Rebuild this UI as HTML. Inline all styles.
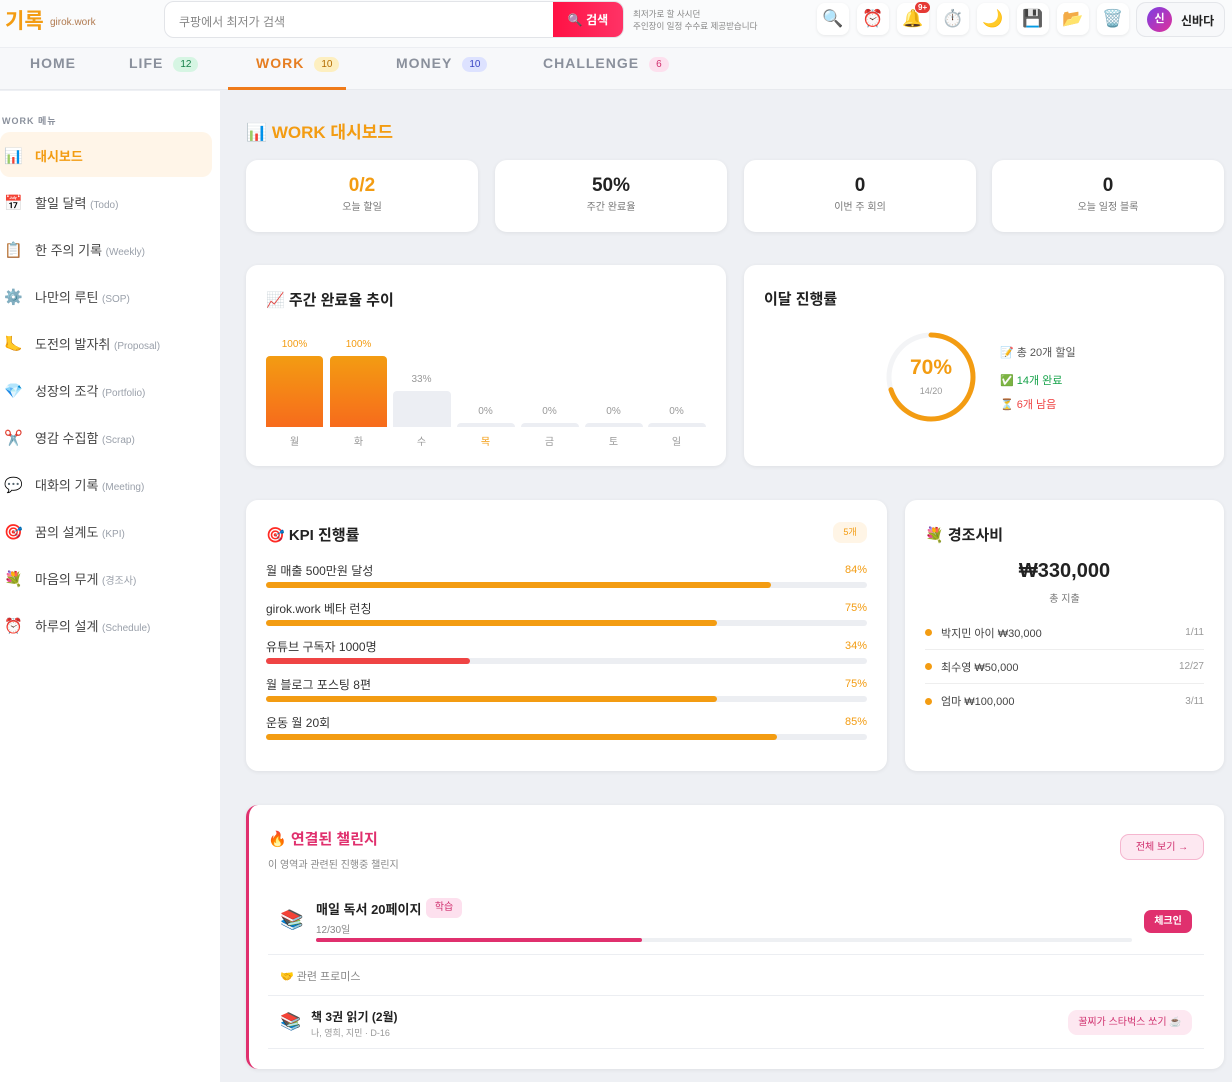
<!DOCTYPE html>
<html><head><meta charset="utf-8"><style>
*{box-sizing:border-box;margin:0;padding:0}
body{width:1232px;height:1082px;overflow:hidden;font-family:"Liberation Sans","Noto Sans CJK KR",sans-serif;background:#eef0f4;position:relative;color:#222}
.a{position:absolute}
.hdr{left:0;top:0;width:1232px;height:48px;background:#fafbfc;border-bottom:1px solid #eceef2}
.nav{left:0;top:48px;width:1232px;height:42px;background:#f7f8fa;border-bottom:1px solid #e8eaee}
.nv{position:absolute;top:55px;font-size:14px;font-weight:bold;letter-spacing:1px;color:#8a909c}
.bd{display:inline-block;font-size:10px;font-weight:normal;letter-spacing:0;padding:2px 7px;border-radius:9px;margin-left:10px;vertical-align:1px}
.side{left:0;top:91px;width:220px;height:991px;background:#fff}
.mi{position:absolute;left:4px;font-size:13px;color:#444;white-space:nowrap}
.mi .ic{display:inline-block;width:22px;font-size:15px;margin-right:9px}
.mi small{font-size:10px;color:#9aa0aa}
.card{position:absolute;background:#fff;border-radius:12px;box-shadow:0 1px 4px rgba(0,0,0,.07)}
.stat{top:160px;width:232px;height:72px;text-align:center}
.stat b{display:block;font-size:19px;margin-top:15px;color:#222}
.stat span{font-size:10px;color:#777}
.icb{position:absolute;top:3px;width:32px;height:32px;background:#fff;border-radius:8px;box-shadow:0 1px 3px rgba(0,0,0,.08);text-align:center;line-height:32px;font-size:17px}
.h3{font-size:15px;font-weight:bold;color:#222}
.bar{position:absolute;border-radius:4px 4px 0 0}
.pl{position:absolute;font-size:10px;color:#999;text-align:center;width:57px}
.kl{position:absolute;left:20px;right:20px;font-size:12px;color:#333;display:flex;justify-content:space-between;align-items:center;height:16px}
.kl i{font-style:normal;color:#f39c12;font-size:11px}
.kt{position:absolute;left:20px;right:20px;height:6px;border-radius:3px;background:#eceef2}
.kt div{height:6px;border-radius:3px;background:#f39c12}
.ev{position:absolute;left:20px;right:20px;font-size:11px;color:#444;height:34px;border-bottom:1px solid #eee;display:flex;align-items:center}
.ev:before{content:"";display:inline-block;width:7px;height:7px;border-radius:50%;background:#f39c12;margin-right:9px}
.ev i{margin-left:auto;font-style:normal;font-size:10px;color:#999}
</style></head><body>
<div class="a hdr"></div>
<div class="a" style="left:5px;top:5px;font-size:21px;font-weight:bold;color:#f39c12">기록</div>
<div class="a" style="left:50px;top:17px;font-size:10px;color:#b07a50">girok.work</div>
<div class="a" style="left:164px;top:1px;width:460px;height:37px;border:1px solid #e2e4e8;border-radius:10px;background:#fff;overflow:hidden">
<span class="a" style="left:14px;top:11px;font-size:12px;color:#888">쿠팡에서 최저가 검색</span>
<div class="a" style="right:0;top:0;width:70px;height:37px;background:linear-gradient(90deg,#ff1144,#ff3366);color:#fff;font-size:12px;font-weight:bold;line-height:37px;text-align:center">🔍 검색</div></div>
<div class="a" style="left:633px;top:8px;font-size:8.5px;color:#888;line-height:12px">최저가로 할 사시던<br>주인장이 일정 수수료 제공받습니다</div>
<div class="icb" style="left:817px">🔍</div><div class="icb" style="left:857px">⏰</div><div class="icb" style="left:897px">🔔</div>
<div class="a" style="left:915px;top:2px;background:#e53935;color:#fff;font-size:8px;border-radius:8px;padding:1px 3px;font-weight:bold">9+</div>
<div class="icb" style="left:937px">⏱️</div><div class="icb" style="left:977px">🌙</div><div class="icb" style="left:1017px">💾</div><div class="icb" style="left:1057px">📂</div><div class="icb" style="left:1097px">🗑️</div>
<div class="a" style="left:1136px;top:2px;width:89px;height:35px;border:1px solid #e4e6ea;border-radius:10px;background:#f7f8fa"></div>
<div class="a" style="left:1147px;top:7px;width:25px;height:25px;border-radius:50%;background:linear-gradient(135deg,#7b3fe4,#e0309a);color:#fff;font-size:11px;font-weight:bold;text-align:center;line-height:25px">신</div>
<div class="a" style="left:1181px;top:12px;font-size:12px;font-weight:bold;color:#222">신바다</div>

<div class="a nav"></div>
<div class="nv" style="left:30px">HOME</div>
<div class="nv" style="left:129px">LIFE<span class="bd" style="background:#d6f5e3;color:#16804a">12</span></div>
<div class="nv" style="left:256px;color:#e67e22">WORK<span class="bd" style="background:#fdefc0;color:#b36b00">10</span></div>
<div class="a" style="left:228px;top:87px;width:118px;height:3px;background:#ef7b1a"></div>
<div class="nv" style="left:396px">MONEY<span class="bd" style="background:#dde2ff;color:#3b46c4">10</span></div>
<div class="nv" style="left:543px">CHALLENGE<span class="bd" style="background:#fde0ee;color:#d0306e">6</span></div>

<div class="a side"></div>
<div class="a" style="left:2px;top:114px;font-size:9px;font-weight:bold;color:#8a909c;letter-spacing:1px">WORK 메뉴</div>
<div class="a" style="left:0;top:132px;width:212px;height:45px;background:#fff5e8;border-radius:10px"></div>
<div class="mi" style="top:146px;color:#f39c12;font-weight:bold"><span class="ic">📊</span>대시보드</div>
<div class="mi" style="top:193px"><span class="ic">📅</span>할일 달력 <small>(Todo)</small></div>
<div class="mi" style="top:240px"><span class="ic">📋</span>한 주의 기록 <small>(Weekly)</small></div>
<div class="mi" style="top:287px"><span class="ic">⚙️</span>나만의 루틴 <small>(SOP)</small></div>
<div class="mi" style="top:334px"><span class="ic">🦶</span>도전의 발자취 <small>(Proposal)</small></div>
<div class="mi" style="top:381px"><span class="ic">💎</span>성장의 조각 <small>(Portfolio)</small></div>
<div class="mi" style="top:428px"><span class="ic">✂️</span>영감 수집함 <small>(Scrap)</small></div>
<div class="mi" style="top:475px"><span class="ic">💬</span>대화의 기록 <small>(Meeting)</small></div>
<div class="mi" style="top:522px"><span class="ic">🎯</span>꿈의 설계도 <small>(KPI)</small></div>
<div class="mi" style="top:569px"><span class="ic">💐</span>마음의 무게 <small>(경조사)</small></div>
<div class="mi" style="top:616px"><span class="ic">⏰</span>하루의 설계 <small>(Schedule)</small></div>

<div class="a" style="left:246px;top:118px;font-size:17px;font-weight:bold;color:#f39c12">📊 WORK 대시보드</div>
<div class="card stat" style="left:246px"><b style="color:#f39c12">0/2</b><span>오늘 할일</span></div>
<div class="card stat" style="left:495px"><b>50%</b><span>주간 완료율</span></div>
<div class="card stat" style="left:744px"><b>0</b><span>이번 주 회의</span></div>
<div class="card stat" style="left:992px"><b>0</b><span>오늘 일정 블록</span></div>

<div class="card" style="left:246px;top:265px;width:480px;height:201px"></div>
<div class="a h3" style="left:266px;top:289px">📈 주간 완료율 추이</div>
<div class="pl" style="left:266px;top:339px;color:#f39c12">100%</div><div class="bar" style="left:266px;top:356px;width:57px;height:71px;background:linear-gradient(#f39c12,#f76b1c)"></div>
<div class="pl" style="left:330px;top:339px;color:#f39c12">100%</div><div class="bar" style="left:330px;top:356px;width:57px;height:71px;background:linear-gradient(#f39c12,#f76b1c)"></div>
<div class="pl" style="left:393px;top:374px">33%</div><div class="bar" style="left:393px;top:391px;width:58px;height:36px;background:#eceef3"></div>
<div class="pl" style="left:457px;top:406px">0%</div><div class="bar" style="left:457px;top:423px;width:58px;height:4px;background:#eceef3"></div>
<div class="pl" style="left:521px;top:406px">0%</div><div class="bar" style="left:521px;top:423px;width:58px;height:4px;background:#eceef3"></div>
<div class="pl" style="left:585px;top:406px">0%</div><div class="bar" style="left:585px;top:423px;width:58px;height:4px;background:#eceef3"></div>
<div class="pl" style="left:648px;top:406px">0%</div><div class="bar" style="left:648px;top:423px;width:58px;height:4px;background:#eceef3"></div>
<div class="pl" style="left:266px;top:433px">월</div><div class="pl" style="left:330px;top:433px">화</div><div class="pl" style="left:393px;top:433px">수</div><div class="pl" style="left:457px;top:433px;color:#f39c12">목</div><div class="pl" style="left:521px;top:433px">금</div><div class="pl" style="left:585px;top:433px">토</div><div class="pl" style="left:648px;top:433px">일</div>

<div class="card" style="left:744px;top:265px;width:480px;height:201px"></div>
<div class="a h3" style="left:764px;top:288px">이달 진행률</div>
<svg class="a" style="left:884px;top:330px" width="94" height="94"><circle cx="47" cy="47" r="42" fill="none" stroke="#f3f4f6" stroke-width="5"/><circle cx="47" cy="47" r="42" fill="none" stroke="#f39c12" stroke-width="5" stroke-dasharray="184.7 264" transform="rotate(-90 47 47)" stroke-linecap="round"/></svg>
<div class="a" style="left:884px;top:356px;width:94px;text-align:center;font-size:21px;font-weight:bold;color:#f39c12">70%</div>
<div class="a" style="left:884px;top:386px;width:94px;text-align:center;font-size:9px;color:#999">14/20</div>
<div class="a" style="left:1000px;top:344px;font-size:11px;color:#555">📝 총 20개 할일</div>
<div class="a" style="left:1000px;top:372px;font-size:11px;color:#16a34a">✅ 14개 완료</div>
<div class="a" style="left:1000px;top:396px;font-size:11px;color:#ef4444">⏳ 6개 남음</div>

<div class="card" style="left:246px;top:500px;width:641px;height:271px"></div>
<div class="a h3" style="left:266px;top:524px">🎯 KPI 진행률</div>
<div class="a" style="left:833px;top:522px;width:34px;height:21px;background:#fff5e6;border-radius:8px;font-size:9px;color:#f39c12;text-align:center;line-height:21px">5개</div>
<div style="position:absolute;left:246px;top:500px;width:641px">
<div class="kl" style="top:62px">월 매출 500만원 달성<i>84%</i></div><div class="kt" style="top:82px"><div style="width:84%"></div></div>
<div class="kl" style="top:100px">girok.work 베타 런칭<i>75%</i></div><div class="kt" style="top:120px"><div style="width:75%"></div></div>
<div class="kl" style="top:138px">유튜브 구독자 1000명<i>34%</i></div><div class="kt" style="top:158px"><div style="width:34%;background:#ef4444"></div></div>
<div class="kl" style="top:176px">월 블로그 포스팅 8편<i>75%</i></div><div class="kt" style="top:196px"><div style="width:75%"></div></div>
<div class="kl" style="top:214px">운동 월 20회<i>85%</i></div><div class="kt" style="top:234px"><div style="width:85%"></div></div>
</div>

<div class="card" style="left:905px;top:500px;width:319px;height:271px"></div>
<div class="a h3" style="left:925px;top:524px">💐 경조사비</div>
<div class="a" style="left:905px;top:560px;width:319px;text-align:center;font-size:20px;font-weight:bold;color:#222">₩330,000</div>
<div class="a" style="left:905px;top:590px;width:319px;text-align:center;font-size:10px;color:#777">총 지출</div>
<div style="position:absolute;left:905px;top:500px;width:319px">
<div class="ev" style="top:116px">박지민 아이 ₩30,000<i>1/11</i></div>
<div class="ev" style="top:150px">최수영 ₩50,000<i>12/27</i></div>
<div class="ev" style="top:184px;border:0">엄마 ₩100,000<i>3/11</i></div>
</div>

<div class="card" style="left:246px;top:805px;width:978px;height:264px;border-left:3px solid #e0306e"></div>
<div class="a" style="left:268px;top:828px;font-size:15px;font-weight:bold;color:#e0306e">🔥 연결된 챌린지</div>
<div class="a" style="left:268px;top:856px;font-size:10px;color:#888">이 영역과 관련된 진행중 챌린지</div>
<div class="a" style="left:1120px;top:834px;width:84px;height:26px;border:1px solid #f5b6cf;background:#fde8f1;border-radius:9px;font-size:10px;color:#d0306e;text-align:center;line-height:25px">전체 보기 →</div>
<div class="a" style="left:280px;top:908px;font-size:19px">📚</div>
<div class="a" style="left:316px;top:899px;font-size:13px;font-weight:bold;color:#222">매일 독서 20페이지</div>
<div class="a" style="left:426px;top:898px;width:36px;height:20px;background:#fde0ee;border-radius:6px;font-size:10px;color:#d0306e;text-align:center;line-height:20px">학습</div>
<div class="a" style="left:316px;top:921px;font-size:10px;color:#888">12/30일</div>
<div class="a" style="left:316px;top:938px;width:816px;height:4px;background:#eef0f3;border-radius:2px"><div style="width:40%;height:4px;background:#e0306e;border-radius:2px"></div></div>
<div class="a" style="left:1144px;top:910px;width:48px;height:23px;background:#e0306e;border-radius:7px;font-size:10px;color:#fff;text-align:center;line-height:23px;font-weight:bold">체크인</div>
<div class="a" style="left:268px;top:954px;width:936px;height:1px;background:#eceef2"></div>
<div class="a" style="left:280px;top:968px;font-size:11px;color:#888">🤝 관련 프로미스</div>
<div class="a" style="left:268px;top:995px;width:936px;height:1px;background:#eceef2"></div>
<div class="a" style="left:280px;top:1012px;font-size:17px">📚</div>
<div class="a" style="left:311px;top:1008px;font-size:12px;font-weight:bold;color:#222">책 3권 읽기 (2월)</div>
<div class="a" style="left:311px;top:1026px;font-size:9px;color:#999">나, 영희, 지민 · D-16</div>
<div class="a" style="left:1068px;top:1010px;width:124px;height:25px;background:#fde8f1;border-radius:9px;font-size:10px;color:#d0306e;text-align:center;line-height:25px">꿀찌가 스타벅스 쏘기 ☕</div>
<div class="a" style="left:268px;top:1048px;width:936px;height:1px;background:#eceef2"></div>
</body></html>
